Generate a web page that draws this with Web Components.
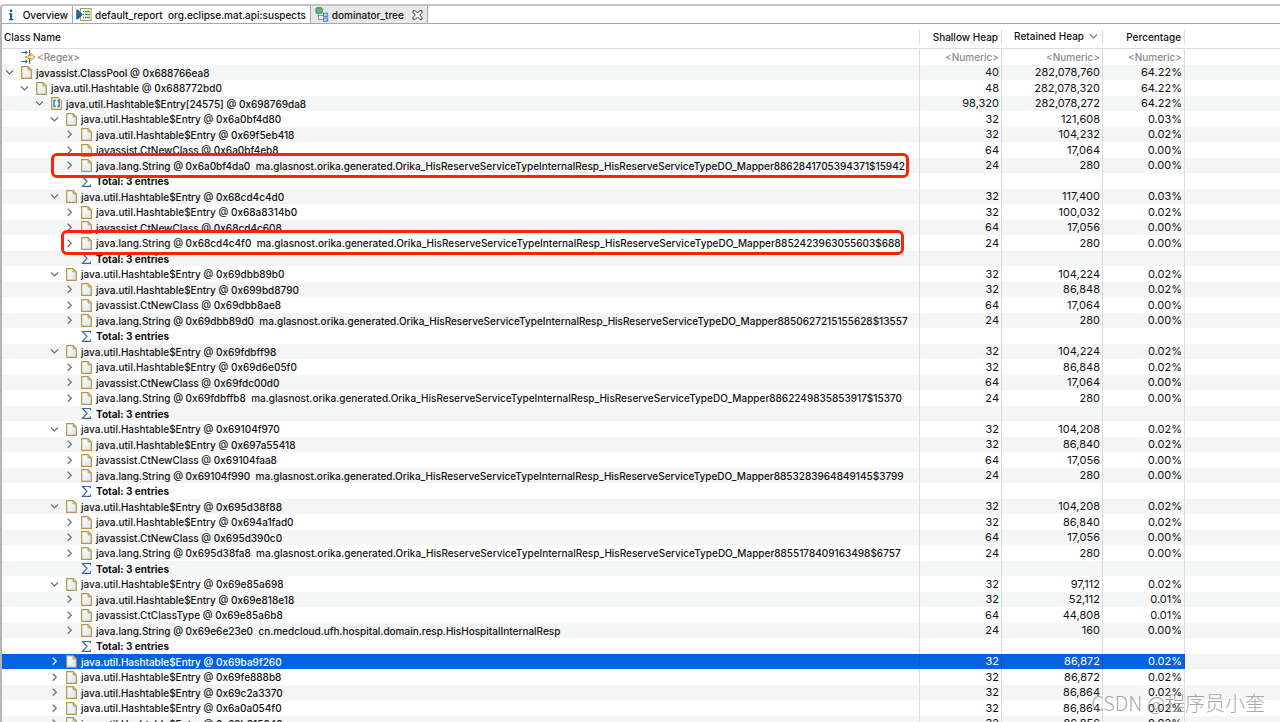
<!DOCTYPE html>
<html lang="en">
<head>
<meta charset="utf-8">
<title>dominator_tree</title>
<style>
html, body { height: 100%; margin: 0; }
body { font-family: Inter, "Noto Sans CJK SC", sans-serif; font-size: 10px; font-weight: 500; color: #111; background: #fff; overflow: hidden; }
</style>
</head>
<body>
<mat-editor></mat-editor>
<script>
const ICONS = {
  info: '<svg width="12" height="12" viewBox="0 0 12 12"><g fill="#1d5c9f"><circle cx="6" cy="1.8" r="1.4"/><path d="M4 4.3h3.2v5.6h1.2v1.3H3.8V9.9H5V5.5H4z"/></g></svg>',
  report: '<svg width="16" height="14" viewBox="0 0 16 14"><rect x="4.5" y=".5" width="10.5" height="12" fill="#fffdf5" stroke="#b99a55"/><path d="M7 3.5h1M7 6.5h1M7 9.500h1" stroke="#2f8a4a" stroke-width="1.6"/><path d="M9 3.500h5M9 6.500h5M9 9.500h5" stroke="#3f9b62" stroke-width="1.400"/><path d="M1 1.500v10" stroke="#1c4f86" stroke-width="1.500"/><path d="M2 2.200L6.500 6.500 2 10.800z" fill="#2b6cad" stroke="#1c4f86" stroke-width=".8"/></svg>',
  tree: '<svg width="14" height="15" viewBox="0 0 14 15"><rect x="1" y=".8" width="6.200" height="5.400" rx=".8" fill="#69b87d" stroke="#318b50"/><path d="M3.500 7v5.500H8M3.500 8.500H8" fill="none" stroke="#7d96ad"/><rect x="8.500" y="6.200" width="4.200" height="3.200" fill="#b9d8f4" stroke="#3b7fc0"/><rect x="8.500" y="11" width="4.200" height="3.200" fill="#b9d8f4" stroke="#3b7fc0"/></svg>',
  close: '<svg width="11" height="10" viewBox="0 0 11 10"><path d="M1 .700h2.300L5.500 3 7.700.700H10v1.900L7.700 5 10 7.400v1.900H7.700L5.500 7 3.300 9.300H1V7.400L3.300 5 1 2.600z" fill="#fff" stroke="#3c3c3c"/></svg>',
  filter: '<svg width="15" height="14" viewBox="0 0 15 14"><path d="M0 2.500h5M0 11.500h5M8.500 0v5M8.500 9v5" stroke="#3b6ea5"/><path d="M4.500.500L7 2.500 4.500 4.500zM4.500 9.500L7 11.500 4.500 13.500z" fill="#2e5f94"/><path d="M4 7h2" stroke="#dfa33c" stroke-width="2"/><path d="M7 5.500h3V3.500L14 7l-4 3.500V8.500H7z" fill="#ffe3a0" stroke="#d39329"/></svg>',
  file: '<svg width="11" height="13" viewBox="0 0 11 13"><defs><linearGradient id="g" x2="1" y2="1"><stop stop-color="#fff"/><stop offset="1" stop-color="#d5e5f7"/></linearGradient></defs><path d="M.700.700h6.300l3.300 3.300v8.300H.700z" fill="url(#g)" stroke="#b9934a" stroke-width="1.200"/><path d="M7 .700V4h3.300z" fill="#e6c173" stroke="#b9934a" stroke-width=".7"/></svg>',
  array: '<svg width="11" height="13" viewBox="0 0 11 13"><path d="M.700.700h6.300l3.300 3.300v8.300H.700z" fill="#f3f8fd" stroke="#b9934a" stroke-width="1.200"/><path d="M7 .700V4h3.300z" fill="#e6c173"/><path d="M4.700 3.500H3v6h1.700M6.300 3.500H8v6H6.300" fill="none" stroke="#3572ad" stroke-width="1.400"/></svg>',
  sum: '<svg width="11" height="13" viewBox="0 0 11 13"><path d="M9.300 3.200V1.500H1.500L6 6.300 1.500 11.300H9.300V9.500" fill="none" stroke="#35689f" stroke-width="1.200"/></svg>',
  down: '<svg width="9" height="9" viewBox="0 0 9 9"><path d="M1 2.500L4.500 6 8 2.500" fill="none" stroke="currentColor" stroke-width="1.200"/></svg>',
  right: '<svg width="9" height="9" viewBox="0 0 9 9"><path d="M2.700.700L6.300 4.200 2.700 7.700" fill="none" stroke="currentColor" stroke-width="1.200"/></svg>'
};

class MatIcon extends HTMLElement {
  connectedCallback() {
    this.attachShadow({ mode: 'open' }).innerHTML =
      `<style>:host{display:block;flex:none}svg{display:block}</style>${ICONS[this.getAttribute('name')]}`;
  }
}
customElements.define('mat-icon', MatIcon);

class EditorTab extends HTMLElement {
  connectedCallback() {
    const active = this.hasAttribute('active');
    this.attachShadow({ mode: 'open' }).innerHTML = `
      <style>
        :host { display: flex; align-items: center; padding: 0 4px 0 3px; border-right: 1px solid #a6a6a6; }
        :host([active]) { background: #e8e8e8; gap: 8px; padding-left: 4px; }
        button { display: flex; align-items: center; gap: 3px; padding: 0; border: 0; background: none; color: inherit; font: inherit; white-space: pre; }
      </style>
      <button role="tab" aria-selected="${active}"><mat-icon name="${this.getAttribute('icon')}"></mat-icon><slot></slot></button>
      ${active ? '<button aria-label="Close"><mat-icon name="close"></mat-icon></button>' : ''}`;
  }
}
customElements.define('editor-tab', EditorTab);

class TreeNode extends HTMLElement {
  connectedCallback() {
    const kind = this.getAttribute('kind');
    const state = this.getAttribute('state');
    this.style.setProperty('--level', this.getAttribute('level'));
    this.attachShadow({ mode: 'open' }).innerHTML = `
      <style>
        :host { display: flex; align-items: center; height: 15px; line-height: 16px; padding-left: calc(3px + 15px * var(--level)); white-space: pre; }
        :host([kind=sum]) { font-weight: 700; }
        button { flex: none; width: 9px; height: 9px; padding: 0; border: 0; background: none; color: var(--chevron, #6e6e6e); }
        span.gap { flex: none; width: 9px; }
        mat-icon.kind { margin: 0 4px 0 7px; }
      </style>
      ${state ? `<button aria-label="Toggle"><mat-icon name="${state}"></mat-icon></button>` : '<span class="gap"></span>'}
      <mat-icon class="kind" name="${kind}"></mat-icon><span><slot></slot></span>`;
  }
}
customElements.define('tree-node', TreeNode);

class HeapTable extends HTMLElement {
  rows() {
    const P = 'ma.glasnost.orika.generated.Orika_HisReserveServiceTypeInternalResp_HisReserveServiceTypeDO_Mapper';
    const out = [
      [0, 'file', 'down', 'javassist.ClassPool @ 0x688766ea8', '40', '282,078,760', '64.22%'],
      [1, 'file', 'down', 'java.util.Hashtable @ 0x688772bd0', '48', '282,078,320', '64.22%'],
      [2, 'array', 'down', 'java.util.Hashtable$Entry[24575] @ 0x698769da8', '98,320', '282,078,272', '64.22%']
    ];
    const groups = [
      ['6a0bf4d80', '121,608', '0.03%', '69f5eb418', '104,232', '0.02%', 'CtNewClass', '6a0bf4eb8', '17,064', '0.00%', '6a0bf4da0', P + '8862841705394371$15942', '280', 'first'],
      ['68cd4c4d0', '117,400', '0.03%', '68a8314b0', '100,032', '0.02%', 'CtNewClass', '68cd4c608', '17,056', '0.00%', '68cd4c4f0', P + '8852423963055603$688', '280', 'second'],
      ['69dbb89b0', '104,224', '0.02%', '699bd8790', '86,848', '0.02%', 'CtNewClass', '69dbb8ae8', '17,064', '0.00%', '69dbb89d0', P + '8850627215155628$13557', '280'],
      ['69fdbff98', '104,224', '0.02%', '69d6e05f0', '86,848', '0.02%', 'CtNewClass', '69fdc00d0', '17,064', '0.00%', '69fdbffb8', P + '8862249835853917$15370', '280'],
      ['69104f970', '104,208', '0.02%', '697a55418', '86,840', '0.02%', 'CtNewClass', '69104faa8', '17,056', '0.00%', '69104f990', P + '8853283964849145$3799', '280'],
      ['695d38f88', '104,208', '0.02%', '694a1fad0', '86,840', '0.02%', 'CtNewClass', '695d390c0', '17,056', '0.00%', '695d38fa8', P + '8855178409163498$6757', '280'],
      ['69e85a698', '97,112', '0.02%', '69e818e18', '52,112', '0.01%', 'CtClassType', '69e85a6b8', '44,808', '0.01%', '69e6e23e0', 'cn.medcloud.ufh.hospital.domain.resp.HisHospitalInternalResp', '160']
    ];
    const entry = 'java.util.Hashtable$Entry @ 0x';
    for (const g of groups) {
      out.push(
        [3, 'file', 'down', entry + g[0], '32', g[1], g[2]],
        [4, 'file', 'right', entry + g[3], '32', g[4], g[5]],
        [4, 'file', 'right', `javassist.${g[6]} @ 0x${g[7]}`, '64', g[8], g[9]],
        [4, 'file', 'right', `java.lang.String @ 0x${g[10]}  ${g[11]}`, '24', g[12], '0.00%', g[13]],
        [4, 'sum', '', 'Total: 3 entries', '', '', '']
      );
    }
    out.push(
      [3, 'file', 'right', entry + '69ba9f260', '32', '86,872', '0.02%', 'selected'],
      [3, 'file', 'right', entry + '69fe888b8', '32', '86,872', '0.02%'],
      [3, 'file', 'right', entry + '69c2a3370', '32', '86,864', '0.02%'],
      [3, 'file', 'right', entry + '6a0a054f0', '32', '86,864', '0.02%'],
      [3, 'file', 'right', entry + '69b815840', '32', '86,856', '0.02%']
    );
    return out;
  }
  connectedCallback() {
    const body = this.rows().map(r => `<tr class="${r[7] || ''}"><td><tree-node level="${r[0]}" kind="${r[1]}" state="${r[2]}">${r[3]}</tree-node></td><td>${r[4]}</td><td>${r[5]}</td><td>${r[6]}</td><td></td></tr>`).join('');
    this.attachShadow({ mode: 'open' }).innerHTML = `
      <style>
        :host { display: block; }
        table { width: 100%; table-layout: fixed; border-collapse: separate; border-spacing: 0; }
        col.shallow { width: 82px; } col.retained { width: 101px; } col.percent { width: 82px; } col.rest { width: 95px; }
        th, td { box-sizing: border-box; padding: 0 2px 0 0; text-align: right; white-space: nowrap; }
        th { height: 25px; padding: 0; font-weight: 500; border-bottom: 1px solid #dedede; }
        th div { height: 15px; line-height: 16px; padding-right: 3px; border-right: 1px solid #dcdcdc; }
        th:first-child div { text-align: left; padding-left: 2px; }
        th.sorted div { display: flex; align-items: center; justify-content: flex-end; gap: 5px; padding-right: 4px; }
        th.sorted mat-icon { color: #777; }
        th:last-child div { border: 0; }
        td { height: 15px; line-height: 15px; border-right: 1px solid #dcdcdc; }
        tbody td { font-size: 11px; font-weight: 400; }
        td:first-child { padding: 0; text-align: left; position: relative; font-size: 10px; font-weight: 500; }
        td:last-child { border-right: 0; }
        tr:nth-child(even) td { height: 16px; }
        tbody tr:nth-child(odd) td { background: #f4f5f5; }
        thead td { height: 16px; }
        .filter { display: flex; align-items: center; padding-left: 19px; }
        input { box-sizing: border-box; width: 100%; height: 14px; padding: 0; border: 0; outline: 0; background: none; font: inherit; text-align: right; color: inherit; }
        .filter input { text-align: left; padding-left: 1px; }
        input::placeholder { color: #8a8a8a; opacity: 1; }
        tbody tr.selected td:not(:last-child) { background: #0262df; border-color: #0a58c4; color: #fff; }
        tr.selected { --chevron: #fff; }
        .first td:first-child::after, .second td:first-child::after { content: ""; position: absolute; z-index: 1; box-sizing: border-box; border: 3px solid #fb2409; border-radius: 6px; }
        .first td:first-child::after { inset: -5px 10px -5px 49px; }
        .second td:first-child::after { inset: -5px 15px -4px 59px; }
      </style>
      <table>
        <colgroup><col><col class="shallow"><col class="retained"><col class="percent"><col class="rest"></colgroup>
        <thead>
          <tr><th><div>Class Name</div></th><th><div>Shallow Heap</div></th><th class="sorted"><div>Retained Heap<mat-icon name="down"></mat-icon></div></th><th><div>Percentage</div></th><th><div></div></th></tr>
          <tr><td><div class="filter"><mat-icon name="filter"></mat-icon><input aria-label="Class Name filter" placeholder="&lt;Regex&gt;"></div></td>
          <td><input aria-label="Shallow Heap filter" placeholder="&lt;Numeric&gt;"></td><td><input aria-label="Retained Heap filter" placeholder="&lt;Numeric&gt;"></td><td><input aria-label="Percentage filter" placeholder="&lt;Numeric&gt;"></td><td></td></tr>
        </thead>
        <tbody>${body}</tbody>
      </table>`;
  }
}
customElements.define('heap-table', HeapTable);

class MatEditor extends HTMLElement {
  connectedCallback() {
    this.attachShadow({ mode: 'open' }).innerHTML = `
      <style>
        :host { display: block; box-sizing: border-box; height: 100vh; padding-top: 4px; overflow: hidden; position: relative; }
        main { min-height: 100%; border-left: 2px solid #b4b4b4; border-top: 2px solid #c4c4c4; border-top-left-radius: 4px; }
        nav { display: flex; height: 17px; border-bottom: 1px solid #a6a6a6; }
        .watermark { position: absolute; right: 15px; bottom: 5px; font: 300 20px/28px "Noto Sans CJK SC", sans-serif; color: rgba(140,140,140,.75); z-index: 2; }
      </style>
      <main>
        <nav role="tablist"><editor-tab icon="info"> Overview</editor-tab><editor-tab icon="report">default_report  org.eclipse.mat.api:suspects</editor-tab><editor-tab icon="tree" active>dominator_tree</editor-tab></nav>
        <heap-table></heap-table>
      </main>
      <div class="watermark">CSDN @程序员小奎</div>`;
  }
}
customElements.define('mat-editor', MatEditor);
</script>
</body>
</html>
